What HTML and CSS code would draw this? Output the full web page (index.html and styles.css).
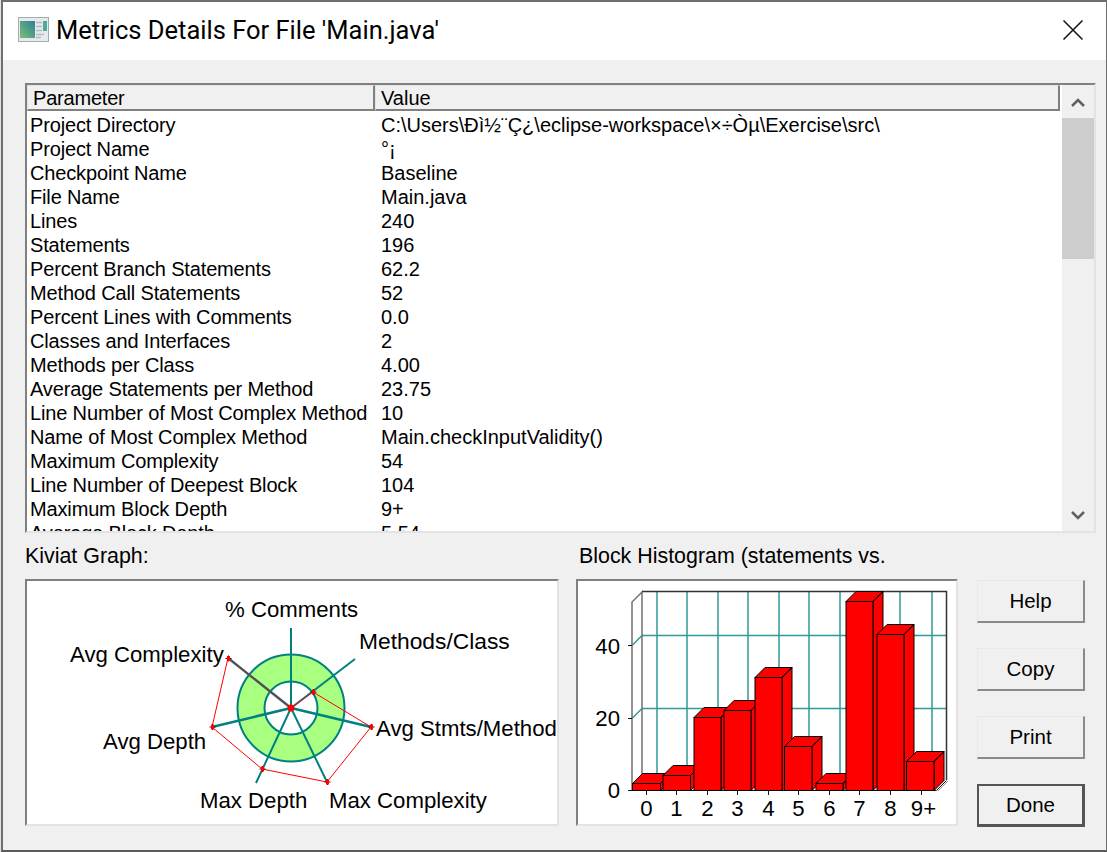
FILE: index.html
```
<!DOCTYPE html>
<html lang="en">
<head>
<meta charset="utf-8">
<title>Metrics Details</title>
<link rel="stylesheet" href="styles.css">
</head>
<body>
<div class="window">
  <header class="titlebar">
    <svg class="app-icon" viewBox="0 0 31 25">
      <defs><linearGradient id="ig" x1="0" y1="1" x2="1" y2="0"><stop offset="0" stop-color="#7cc070"/><stop offset="1" stop-color="#2f7f9c"/></linearGradient></defs>
      <rect x="0.5" y="0.5" width="30" height="24" fill="#e6eaec" stroke="#a4acb0"/>
      <rect x="2" y="4" width="15" height="17" fill="url(#ig)"/>
      <path d="M18 5.500h6M18 9.500h6M18 13.500h6M18 17.500h8M18 20.500h5" stroke="#b4bcc0" stroke-width="1.500"/>
      <rect x="25" y="4" width="4" height="10" fill="#4fa898"/>
    </svg>
    <h1 class="title">Metrics Details For File 'Main.java'</h1>
    <svg class="close" viewBox="0 0 20 20"><path d="M0.5 0.5L19.5 19.5M19.5 0.5L0.5 19.5" stroke="#111" stroke-width="1.5" fill="none"/></svg>
  </header>
  <main class="content">
    <section class="list">
      <div class="list-main">
        <div class="list-head">
          <div class="hcell hcell-param">Parameter</div>
          <div class="hcell hcell-value">Value</div>
        </div>
        <div class="rows">
          <div class="row"><span>Project Directory</span><span>C:\Users\Ðì½¨Ç¿\eclipse-workspace\×÷Òµ\Exercise\src\</span></div>
          <div class="row"><span>Project Name</span><span>°¡</span></div>
          <div class="row"><span>Checkpoint Name</span><span>Baseline</span></div>
          <div class="row"><span>File Name</span><span>Main.java</span></div>
          <div class="row"><span>Lines</span><span>240</span></div>
          <div class="row"><span>Statements</span><span>196</span></div>
          <div class="row"><span>Percent Branch Statements</span><span>62.2</span></div>
          <div class="row"><span>Method Call Statements</span><span>52</span></div>
          <div class="row"><span>Percent Lines with Comments</span><span>0.0</span></div>
          <div class="row"><span>Classes and Interfaces</span><span>2</span></div>
          <div class="row"><span>Methods per Class</span><span>4.00</span></div>
          <div class="row"><span>Average Statements per Method</span><span>23.75</span></div>
          <div class="row"><span>Line Number of Most Complex Method</span><span>10</span></div>
          <div class="row"><span>Name of Most Complex Method</span><span>Main.checkInputValidity()</span></div>
          <div class="row"><span>Maximum Complexity</span><span>54</span></div>
          <div class="row"><span>Line Number of Deepest Block</span><span>104</span></div>
          <div class="row"><span>Maximum Block Depth</span><span>9+</span></div>
          <div class="row"><span>Average Block Depth</span><span>5.54</span></div>
        </div>
      </div>
      <div class="scrollbar">
        <svg class="arrow" viewBox="0 0 14 9"><path d="M1 8L7 2L13 8" fill="none" stroke="#606060" stroke-width="2.5"/></svg>
        <div class="track"><div class="thumb"></div></div>
        <svg class="arrow" viewBox="0 0 14 9"><path d="M1 1L7 7L13 1" fill="none" stroke="#606060" stroke-width="2.5"/></svg>
      </div>
    </section>
    <section class="lower">
      <div class="group group-kiviat">
        <div class="caption">Kiviat Graph:</div>
        <div class="panel">
          <svg class="chart" viewBox="27 581 530 243" width="530" height="243">
            <circle cx="291" cy="708" r="53.500" fill="#a8ff80" stroke="#008080" stroke-width="2"/>
            <circle cx="291" cy="708" r="26.500" fill="#fff" stroke="#008080" stroke-width="2"/>
            <path class="spoke" d="M291 708L291 628M291 708L355 659M291 708L327 782M291 708L256 783"/>
            <path class="spoke spoke-wide" d="M291 708L371 727M291 708L212 727M291 708L228 658"/>
            <path class="trace" d="M291 708L228 658L212 727L262 769L327 782L371 727L313 692Z"/>
            <path class="mark" d="M225.500 658.500h6M228.500 655.500v6M310.500 692h6M313.500 689v6M368.500 727h6M371.500 724v6M324.500 782h6M327.500 779v6M259.500 769h6M262.500 766v6M209.500 727h6M212.500 724v6"/>
            <path class="mark-dot" d="M228.500 656v5M313.500 689.500v5M371.500 724.500v5M327.500 779.500v5M262.500 766.500v5M212.500 724.500v5"/>
            <circle cx="291" cy="708" r="3.500" fill="#f00"/>
            <g class="label">
              <text x="225" y="617">% Comments</text>
              <text class="wide" x="359" y="649">Methods/Class</text>
              <text x="376" y="736">Avg Stmts/Method</text>
              <text x="329" y="808">Max Complexity</text>
              <text x="200" y="808">Max Depth</text>
              <text x="103" y="749">Avg Depth</text>
              <text x="70" y="662">Avg Complexity</text>
            </g>
          </svg>
        </div>
      </div>
      <div class="group group-hist">
        <div class="caption">Block Histogram (statements vs.</div>
        <div class="panel">
          <svg class="chart" viewBox="578 581 378 243" width="378" height="243">
            <g stroke="#008080" stroke-width="1.5" fill="none" opacity="0.8">
              <path d="M657 592V780M687 592V780M718 592V780M748 592V780M779 592V780M809 592V780M840 592V780M870 592V780M900 592V780M932 592V780"/>
              <path d="M642 635.500H947M642 708.500H947M632 645.500L642 635.500M632 718.500L642 708.500"/>
            </g>
            <path d="M642 780V592L632 602V790" fill="none" stroke="#707070" stroke-width="1.500"/>
            <path d="M642 591.500H946.500V780" fill="none" stroke="#333" stroke-width="1.500"/>
            <path d="M628 645.500H632M628 718.500H632M628 790.500H936.500L946.500 780.500" fill="none" stroke="#111"/>
            <path d="M938 791L948 781" fill="none" stroke="#999"/>
            <path d="M646.500 790V795M676.500 790V795M707.500 790V795M737.500 790V795M768.500 790V795M798.500 790V795M829.500 790V795M859.500 790V795M890.500 790V795M921.500 790V795" fill="none" stroke="#111"/>
            <g class="bars">
              <path d="M632.500 783.500L642.500 773.500H670.500L660.500 783.500ZM660.500 783.500L670.500 773.500V780.500L660.500 790.500Z"/><rect x="632.500" y="783.500" width="28" height="7"/>
              <path d="M663 775.500L673 765.500H700.500L690.500 775.500ZM690.500 775.500L700.500 765.500V780.500L690.500 790.500Z"/><rect x="663" y="775.500" width="27.500" height="15"/>
              <path d="M694 717.500L704 707.500H731L721 717.500ZM721 717.500L731 707.500V780.500L721 790.500Z"/><rect x="694" y="717.500" width="27" height="73"/>
              <path d="M724 710.500L734 700.500H761L751 710.500ZM751 710.500L761 700.500V780.500L751 790.500Z"/><rect x="724" y="710.500" width="27" height="80"/>
              <path d="M755 677.500L765 667.500H792L782 677.500ZM782 677.500L792 667.500V780.500L782 790.500Z"/><rect x="755" y="677.500" width="27" height="113"/>
              <path d="M784.500 746.500L794.500 736.500H822L812 746.500ZM812 746.500L822 736.500V780.500L812 790.500Z"/><rect x="784.500" y="746.500" width="27.500" height="44"/>
              <path d="M816 783.500L826 773.500H853L843 783.500ZM843 783.500L853 773.500V780.500L843 790.500Z"/><rect x="816" y="783.500" width="27" height="7"/>
              <path d="M846 601.500L856 591.500H883L873 601.500ZM873 601.500L883 591.500V780.500L873 790.500Z"/><rect x="846" y="601.500" width="27" height="189"/>
              <path d="M877 634.500L887 624.500H914L904 634.500ZM904 634.500L914 624.500V780.500L904 790.500Z"/><rect x="877" y="634.500" width="27" height="156"/>
              <path d="M906.500 761.500L916.500 751.500H944L934 761.500ZM934 761.500L944 751.500V780.500L934 790.500Z"/><rect x="906.500" y="761.500" width="27.500" height="29"/>
            </g>
            <g class="label">
              <text class="end" x="620" y="654">40</text>
              <text class="end" x="620" y="726">20</text>
              <text class="end" x="620" y="798">0</text>
              <text class="mid" x="646.500" y="816">0</text>
              <text class="mid" x="676.500" y="816">1</text>
              <text class="mid" x="707.500" y="816">2</text>
              <text class="mid" x="737.500" y="816">3</text>
              <text class="mid" x="768.500" y="816">4</text>
              <text class="mid" x="798.500" y="816">5</text>
              <text class="mid" x="829.500" y="816">6</text>
              <text class="mid" x="859.500" y="816">7</text>
              <text class="mid" x="890.500" y="816">8</text>
              <text class="mid" x="923.500" y="816">9+</text>
            </g>
          </svg>
        </div>
      </div>
      <div class="buttons">
        <button class="btn">Help</button>
        <button class="btn">Copy</button>
        <button class="btn">Print</button>
        <button class="btn btn-default">Done</button>
      </div>
    </section>
  </main>
</div>
</body>
</html>
```
FILE: styles.css
```
* { box-sizing: border-box; }
html, body { margin: 0; padding: 0; background: #dfe3e8; }
body { width: 1107px; height: 852px; overflow: hidden; font-family: "Liberation Sans", Arial, sans-serif; color: #000; }
.window { margin-left: 1px; width: 1106px; height: 852px; border-top: 2px solid #6e6e6e; border-left: 2px solid #6e6e6e; border-right: 1px solid #6e6e6e; border-bottom: 2px solid #5a5a5a; display: flex; flex-direction: column; background: #f0f0f0; }
.titlebar { height: 58px; background: #fff; display: flex; align-items: center; padding: 0 23px 3px 15px; flex: none; }
.app-icon { width: 31px; height: 25px; flex: none; }
.title { margin: 0 0 0 7px; font: 400 25.5px Roboto, "Open Sans", sans-serif; color: #000; flex: 1; white-space: nowrap; }
.close { width: 20px; height: 20px; flex: none; }
.content { flex: 1; padding: 23px 10px 0 22px; display: flex; flex-direction: column; }
.list { height: 450px; flex: none; display: flex; border-top: 2px solid #808080; border-left: 2px solid #808080; border-right: 2px solid #e3e3e3; border-bottom: 2px solid #e3e3e3; background: #fff; }
.list-main { flex: 1; min-width: 0; overflow: hidden; }
.list-head { display: flex; height: 26px; margin-right: 2px; background: #f0f0f0; }
.hcell { font-size: 20px; line-height: 25px; height: 26px; background: #f0f0f0; border-top: 1px solid #e3e3e3; border-left: 1px solid #e3e3e3; border-right: 2px solid #808080; border-bottom: 2px solid #808080; }
.hcell-param { width: 348px; padding-left: 5px; letter-spacing: -0.2px; }
.hcell-value { flex: 1; padding-left: 5px; }
.rows { padding-top: 2px; }
.row { display: flex; height: 24px; font-size: 20px; line-height: 24px; white-space: nowrap; }
.row span:first-child { width: 354px; padding-left: 3px; flex: none; letter-spacing: -0.15px; }
.scrollbar { width: 32px; flex: none; background: #f0f0f0; display: flex; flex-direction: column; align-items: center; }
.arrow { width: 14px; height: 9px; flex: none; margin: 13px 0 11px; }
.track { flex: 1; width: 32px; }
.thumb { height: 141px; background: #cdcdcd; }
.lower { display: flex; flex: 1; margin-top: 12px; }
.group { display: flex; flex-direction: column; flex: none; }
.group-kiviat { width: 534px; margin-right: 17px; }
.group-hist { width: 382px; margin-right: 19px; }
.caption { font-size: 21.4px; line-height: 22px; height: 34px; white-space: nowrap; }
.group-hist .caption { padding-left: 3px; }
.panel { height: 247px; border-top: 2px solid #808080; border-left: 2px solid #808080; border-right: 2px solid #e3e3e3; border-bottom: 2px solid #e3e3e3; background: #fff; }
.chart { display: block; }
.spoke { fill: none; stroke: #008080; stroke-width: 2; }
.spoke-wide { stroke-width: 2.5; }
.trace { fill: none; stroke: #f00; stroke-width: 1; }
.mark { fill: none; stroke: #500; stroke-width: 1; }
.mark-dot { fill: none; stroke: #f00; stroke-width: 3; }
.label text { font-family: "Liberation Sans", Arial, sans-serif; font-size: 22.2px; fill: #000; }
.label .wide { font-size: 22.8px; }
.label .end { text-anchor: end; }
.label .mid { text-anchor: middle; }
.bars path, .bars rect { fill: #f00; stroke: #000; stroke-width: 1; }
.buttons { display: flex; flex-direction: column; gap: 25px; padding-top: 35px; flex: none; }
.btn { width: 108px; height: 43px; padding: 0; font: 20.5px "Liberation Sans", Arial, sans-serif; color: #000; background: #f0f0f0; border-top: 1px solid #e8e8e8; border-left: 1px solid #e8e8e8; border-right: 2px solid #8a8a8a; border-bottom: 2px solid #8a8a8a; }
.btn-default { border: 2px solid #555; border-right-width: 3px; border-bottom-width: 3px; }
```
